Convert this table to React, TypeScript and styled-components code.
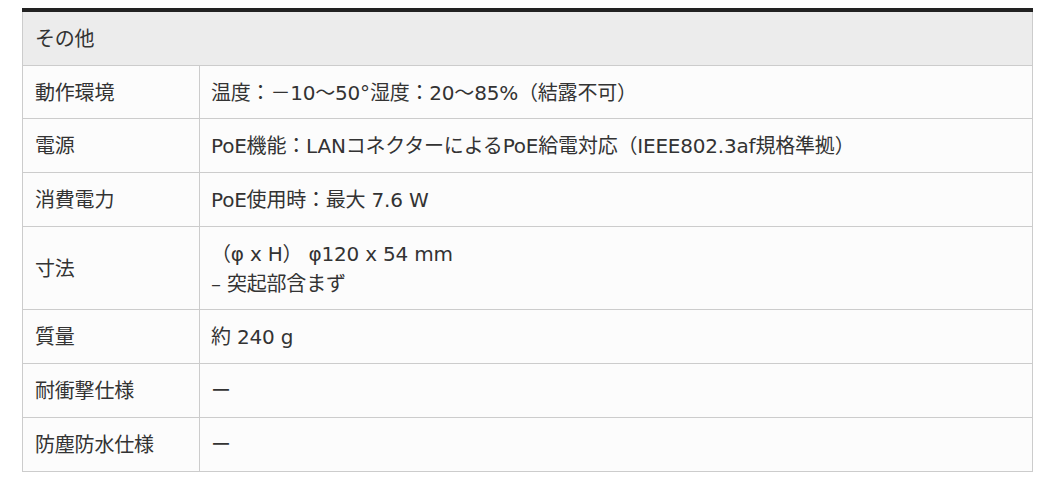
import { createGlobalStyle, styled } from "styled-components";

const GlobalStyle = createGlobalStyle`
  html, body {
    margin: 0;
    padding: 0;
    background: #ffffff;
  }
  body {
    font-family: "DejaVu Sans", "Noto Sans CJK JP", sans-serif;
    color: #333333;
  }
`;

const Page = styled.div`
  padding: 8px 19px 0 22px;
`;

const Table = styled.table`
  width: 100%;
  border-collapse: collapse;
  border-top: 4px solid #222222;
  font-size: 20px;
  line-height: 30px;
  letter-spacing: -0.2px;
`;

const HeadCell = styled.th`
  background: #ececec;
  border: 1px solid #cccccc;
  border-top: none;
  text-align: left;
  font-weight: 400;
  padding: 12px 12px 10.7px 12px;
`;

const Label = styled.th`
  width: 152px;
  background: #fcfcfc;
  border: 1px solid #cccccc;
  text-align: left;
  font-weight: 400;
  padding: 12px 12px 10.7px;
  vertical-align: middle;
`;

const Value = styled.td`
  background: #fcfcfc;
  border: 1px solid #cccccc;
  padding: 12px 11px 10.7px;
  vertical-align: middle;
`;

const Line = styled.div`
  height: 30px;
  white-space: nowrap;
`;

const rows: { label: string; value: string[] }[] = [
  { label: "動作環境", value: ["温度：－10〜50°湿度：20〜85%（結露不可）"] },
  {
    label: "電源",
    value: ["PoE機能：LANコネクターによるPoE給電対応（IEEE802.3af規格準拠）"],
  },
  { label: "消費電力", value: ["PoE使用時：最大 7.6 W"] },
  { label: "寸法", value: ["（φ x H） φ120 x 54 mm", "– 突起部含まず"] },
  { label: "質量", value: ["約 240 g"] },
  { label: "耐衝撃仕様", value: ["ー"] },
  { label: "防塵防水仕様", value: ["ー"] },
];

export default function App() {
  return (
    <Page>
      <GlobalStyle />
      <Table>
        <thead>
          <tr>
            <HeadCell colSpan={2}>
              <Line>その他</Line>
            </HeadCell>
          </tr>
        </thead>
        <tbody>
          {rows.map((r) => (
            <tr key={r.label}>
              <Label>
                <Line>{r.label}</Line>
              </Label>
              <Value>
                {r.value.map((line, i) => (
                  <Line key={i}>{line}</Line>
                ))}
              </Value>
            </tr>
          ))}
        </tbody>
      </Table>
    </Page>
  );
}
